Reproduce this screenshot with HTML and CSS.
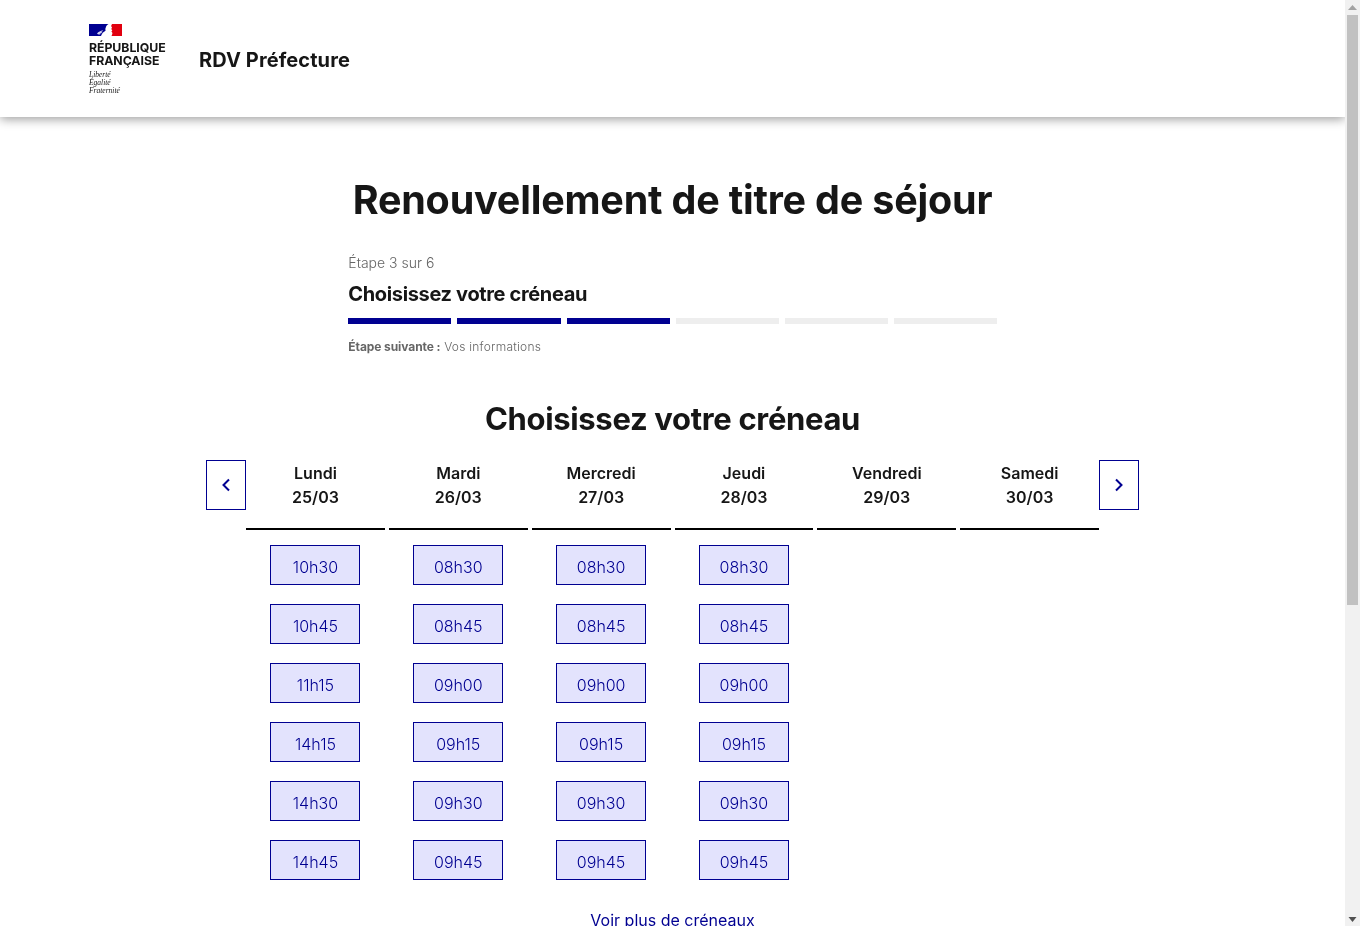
FILE: index.html
```html
<!DOCTYPE html>
<html lang="fr">
<head>
<meta charset="utf-8">
<title>RDV Préfecture</title>
<link rel="stylesheet" href="styles.css">
</head>
<body>
<header class="site-header">
  <div class="logo">
    <svg class="flag" width="33" height="12" viewBox="0 0 33 12" aria-hidden="true">
      <rect width="33" height="12" fill="#fff"/>
      <path d="M0 0h19.500c-1.500 1-2.800 2.500-2.800 4l-.6 1.200.6.500c0 1-.8 1.500-2 2.300-1.200.8-2.200 2.600-2.700 4H0z" fill="#000091"/>
      <path d="M23 0h10v12H22.500c.7-1.500 1.200-2.500.7-3.500l-.8-1 .9-1-1-1.500.7-1.500-.9-1.500z" fill="#e1000f"/>
      <path d="M8 9.500c1.500-1.700 3.500-2.700 6-3.200-.5 1-1.300 1.500-2 1.900.5.100 1 .1 1.500-.1-.7 1-1.800 1.700-3 1.600.4.300.7.400 1 .3-1 .8-2.600.8-3.500-.5z" fill="#d5d6f2"/>
    </svg>
    <p class="logo-name">RÉPUBLIQUE<br>FRANÇAISE</p>
    <p class="logo-motto">Liberté<br>Égalité<br>Fraternité</p>
  </div>
  <p class="service">RDV Préfecture</p>
</header>

<main class="page">
  <h1 class="title">Renouvellement de titre de séjour</h1>

  <section class="stepper">
    <p class="step-count">Étape 3 sur 6</p>
    <h2 class="step-title">Choisissez votre créneau</h2>
    <div class="bars">
      <span class="bar bar-on"></span><span class="bar bar-on"></span><span class="bar bar-on"></span>
      <span class="bar"></span><span class="bar"></span><span class="bar"></span>
    </div>
    <p class="step-next"><b>Étape suivante :</b> Vos informations</p>
  </section>

  <h2 class="section-title">Choisissez votre créneau</h2>

  <section class="calendar">
    <button class="nav" aria-label="Précédent">
      <svg width="12" height="16" viewBox="0 0 12 16"><path d="M9 2.500 3.500 8 9 13.500" fill="none" stroke="#000091" stroke-width="2"/></svg>
    </button>
    <div class="days">
      <div class="day">
        <div class="day-head">Lundi<br>25/03</div>
        <a class="slot">10h30</a><a class="slot">10h45</a><a class="slot">11h15</a><a class="slot">14h15</a><a class="slot">14h30</a><a class="slot">14h45</a>
      </div>
      <div class="day">
        <div class="day-head">Mardi<br>26/03</div>
        <a class="slot">08h30</a><a class="slot">08h45</a><a class="slot">09h00</a><a class="slot">09h15</a><a class="slot">09h30</a><a class="slot">09h45</a>
      </div>
      <div class="day">
        <div class="day-head">Mercredi<br>27/03</div>
        <a class="slot">08h30</a><a class="slot">08h45</a><a class="slot">09h00</a><a class="slot">09h15</a><a class="slot">09h30</a><a class="slot">09h45</a>
      </div>
      <div class="day">
        <div class="day-head">Jeudi<br>28/03</div>
        <a class="slot">08h30</a><a class="slot">08h45</a><a class="slot">09h00</a><a class="slot">09h15</a><a class="slot">09h30</a><a class="slot">09h45</a>
      </div>
      <div class="day">
        <div class="day-head">Vendredi<br>29/03</div>
      </div>
      <div class="day">
        <div class="day-head">Samedi<br>30/03</div>
      </div>
    </div>
    <button class="nav" aria-label="Suivant">
      <svg width="12" height="16" viewBox="0 0 12 16"><path d="M3 2.500 8.500 8 3 13.500" fill="none" stroke="#000091" stroke-width="2"/></svg>
    </button>
  </section>

  <p class="more"><a class="more-link">Voir plus de créneaux</a></p>
</main>

<aside class="scrollbar" aria-hidden="true">
  <svg class="scroll-arrow" width="15" height="15" viewBox="0 0 15 15"><path d="M7.500 5 12 10H3z" fill="#a3a3a3"/></svg>
  <div class="scroll-track"><div class="scroll-thumb"></div></div>
  <svg class="scroll-arrow" width="15" height="15" viewBox="0 0 15 15"><path d="M3.500 6h8l-4 5z" fill="#505050"/></svg>
</aside>
</body>
</html>
```

FILE: styles.css
```css
* { box-sizing: border-box; }
html { overflow: hidden; }
body {
  margin: 0 15px 0 0;
  background: #fff;
  color: #161616;
  font-family: Inter, "Noto Sans", sans-serif;
}
p, h1, h2 { margin: 0; }

.scrollbar {
  position: fixed;
  top: 0;
  right: 0;
  bottom: 0;
  z-index: 10;
  width: 15px;
  display: flex;
  flex-direction: column;
  background: #f1f1f1;
}
.scroll-arrow { flex: none; display: block; }
.scroll-track { flex: 1; padding: 0 2px; }
.scroll-thumb { height: 590px; background: #c1c1c1; }

.site-header {
  height: 117px;
  display: flex;
  align-items: center;
  padding-left: 89px;
  box-shadow: 0 2px 10px rgba(0, 0, 0, .4);
  position: relative;
  will-change: transform;
}
.logo { width: 110px; align-self: flex-start; margin-top: 24px; }
.flag { display: block; margin-bottom: 5px; }
.logo-name {
  font-size: 12.300px;
  line-height: 13px;
  font-weight: 700;
  letter-spacing: -.05px;
}
.logo-motto {
  margin-top: 4px;
  font-family: "Liberation Serif", serif;
  font-style: italic;
  font-size: 7.500px;
  line-height: 8px;
}
.service { font-size: 20px; font-weight: 700; line-height: 28px; padding-top: 2px; letter-spacing: .1px; }

.page { will-change: transform; }
.title {
  margin-top: 59px;
  text-align: center;
  font-size: 39.500px;
  line-height: 48px;
  font-weight: 700;
  letter-spacing: -.2px;
}
.stepper { width: 649px; margin: 29px 0 0 348.300px; }
.step-count { font-size: 14px; line-height: 20px; color: #666; font-weight: 300; }
.step-title { margin-top: 7px; font-size: 20px; line-height: 28px; font-weight: 700; letter-spacing: -.35px; }
.bars { display: grid; grid-template-columns: repeat(6, 1fr); gap: 6px; margin-top: 10px; }
.bar { height: 6px; background: #eee; }
.bar-on { background: #000091; }
.step-next { margin-top: 12px; padding-top: 1px; font-size: 12px; line-height: 19px; color: #666; font-weight: 300; letter-spacing: .24px; }
.step-next b { font-weight: 700; letter-spacing: -.08px; }

.section-title {
  margin-top: 43px;
  text-align: center;
  font-size: 31px;
  line-height: 40px;
  font-weight: 700;
  letter-spacing: -.33px;
}
.calendar { display: flex; align-items: flex-start; margin: 21px 0 0 206.050px; width: 933px; }
.nav {
  flex: none;
  width: 40px;
  height: 50px;
  padding: 0;
  display: flex;
  align-items: center;
  justify-content: center;
  background: #fff;
  border: 1px solid #000091;
}
.days { flex: 1; display: grid; grid-template-columns: repeat(6, 1fr); gap: 4px; }
.day { display: flex; flex-direction: column; align-items: center; }
.day-head {
  align-self: stretch;
  height: 70px;
  padding-top: 1px;
  text-align: center;
  font-size: 16px;
  line-height: 24px;
  font-weight: 600;
  border-bottom: 2px solid #000;
  margin-bottom: 15px;
}
.slot {
  width: 90px;
  height: 40px;
  margin-bottom: 19px;
  display: flex;
  align-items: center;
  justify-content: center;
  padding-top: 3px;
  background: #e3e3fd;
  border: 1px solid #000091;
  color: #000091;
  font-size: 16px;
  font-weight: 300;
}
.more { margin-top: 9px; text-align: center; line-height: 24px; font-size: 16px; }
.more-link { color: #000091; font-weight: 400; }
```
